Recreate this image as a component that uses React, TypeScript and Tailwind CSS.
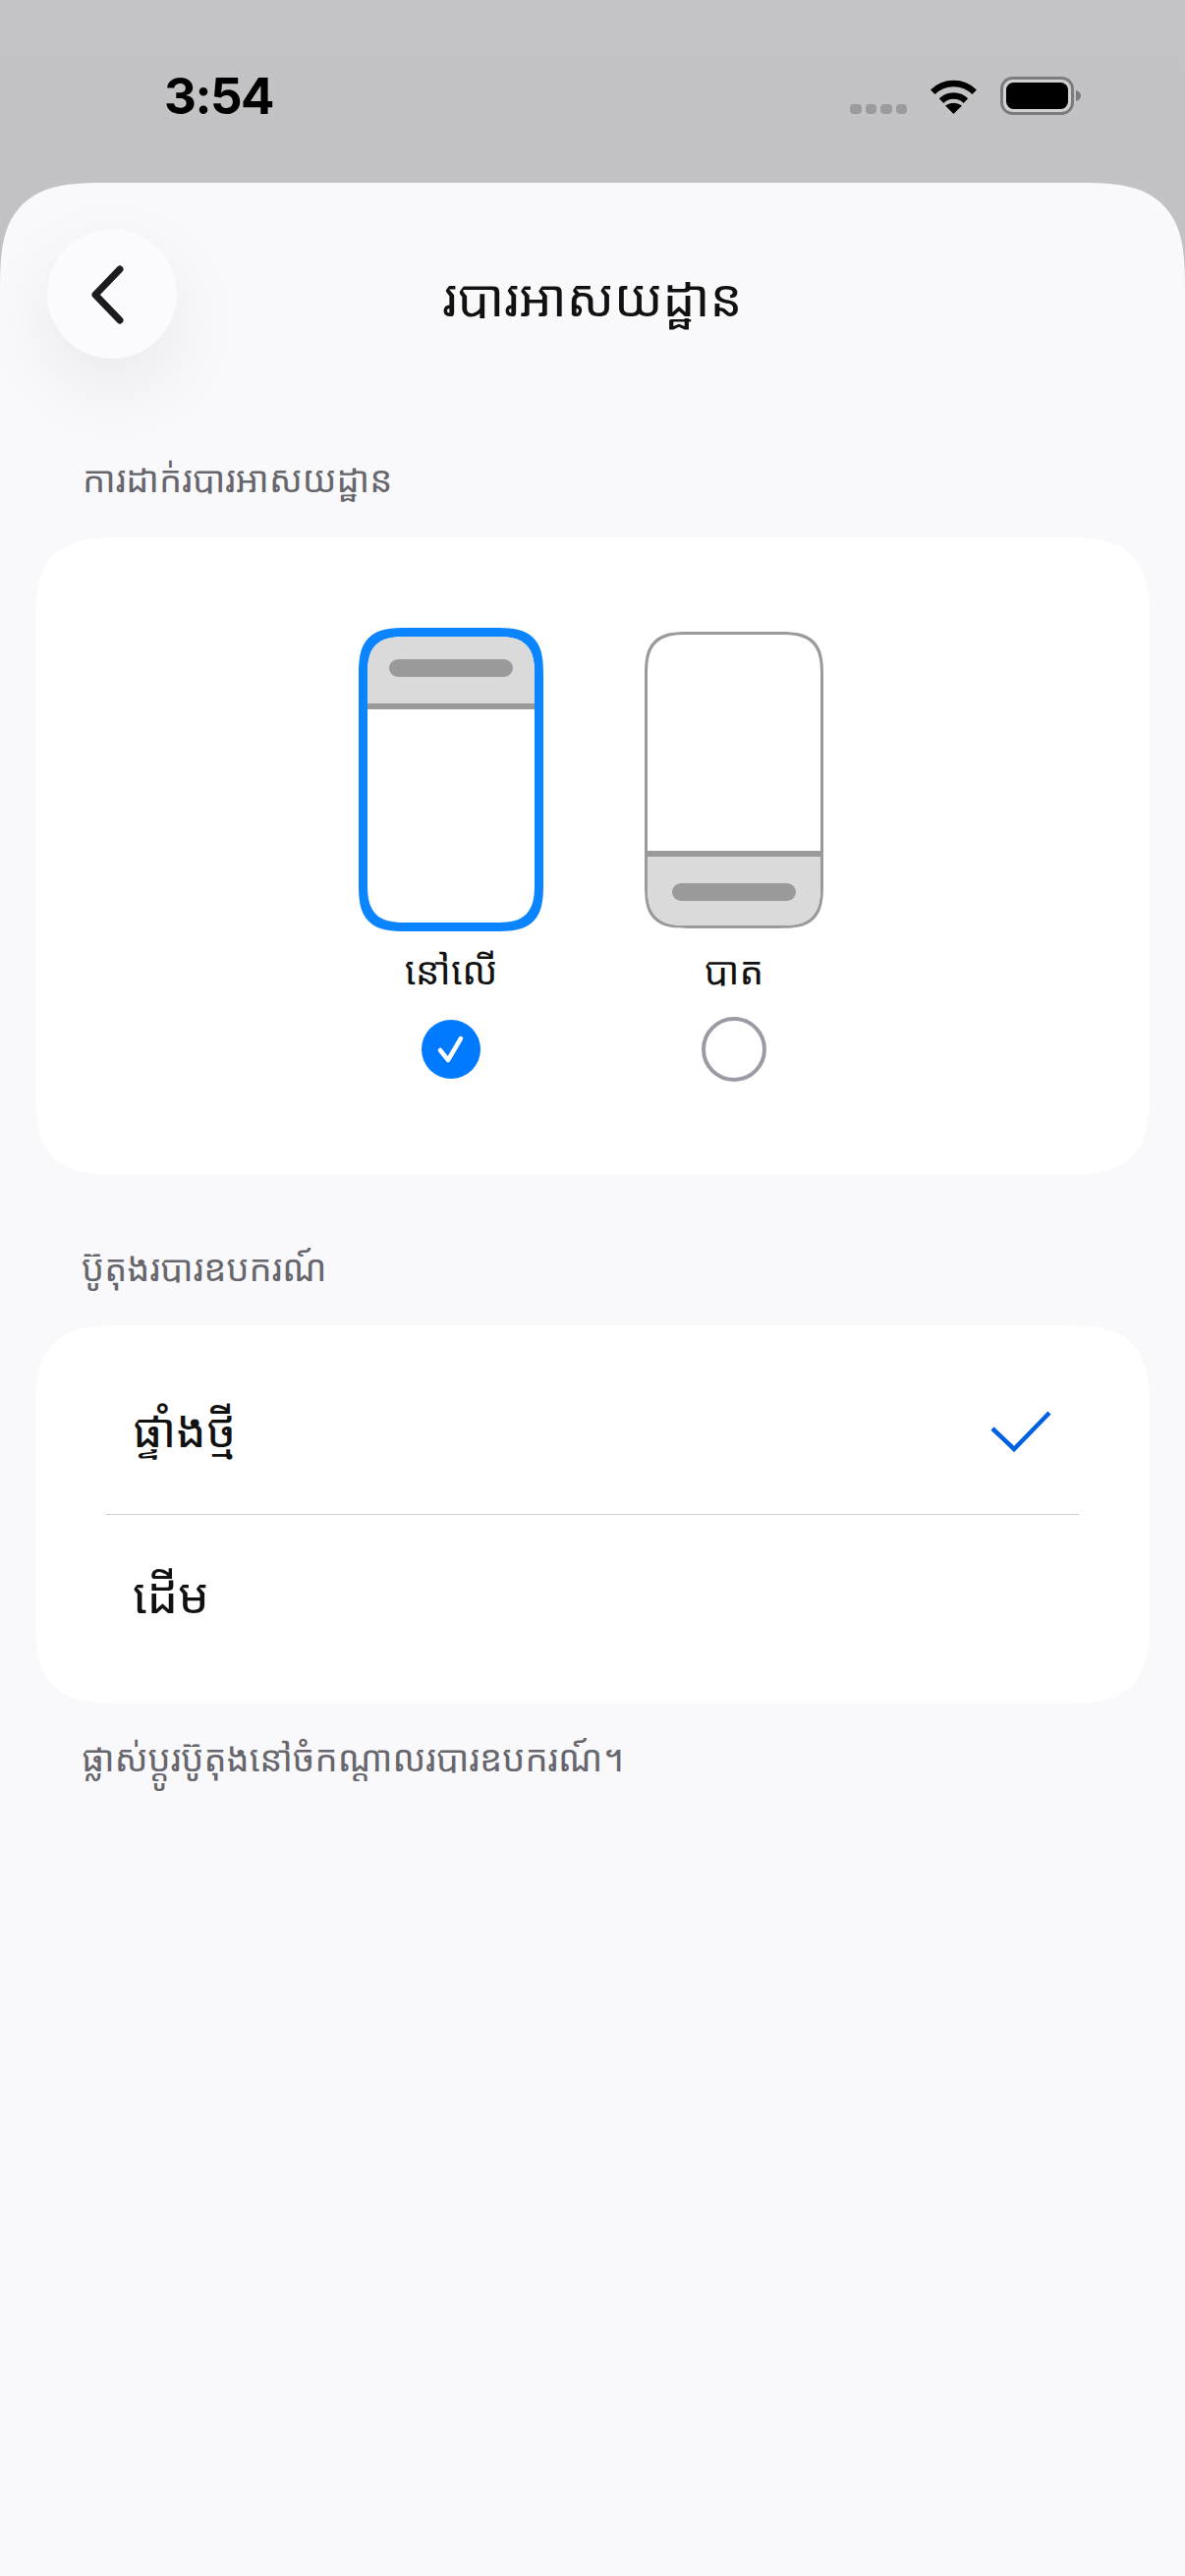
const khmer = "font-['Noto_Sans','Noto_Sans_Khmer','Khmer_Sangam_MN','DejaVu_Sans',sans-serif]";

function Wifi() {
  return (
    <svg width="51" height="37" viewBox="0 0 51 37">
      <path d="M4.3 14.8A30 30 0 0 1 46.7 14.8" fill="none" stroke="#000" strokeWidth="6.5" />
      <path d="M13.1 23.6A17.5 17.5 0 0 1 37.9 23.6" fill="none" stroke="#000" strokeWidth="6.5" />
      <path d="M25.5 37L17 28.5Q25.5 23 34 28.5Z" fill="#000" />
    </svg>
  );
}

function Battery() {
  return (
    <svg width="82" height="39" viewBox="0 0 82 39">
      <rect x="1.5" y="1.5" width="72" height="36" rx="11" fill="#d2d2d4" stroke="#7c7c7e" strokeWidth="3" />
      <rect x="6" y="6" width="63" height="27" rx="7.5" fill="#000" />
      <path d="M77 14Q82 15.5 82 19.5Q82 23.5 77 25Z" fill="#7c7c7e" />
    </svg>
  );
}

function PhoneTop() {
  return (
    <div className="w-[188px] h-[309px] rounded-[50px] [corner-shape:superellipse(1.6)] border-[9px] border-[#0a84ff] bg-white overflow-hidden flex flex-col">
      <div className="h-[74px] shrink-0 bg-[#dadada] flex justify-center pt-[23px] border-b-[6px] border-[#9a9a9a]">
        <div className="w-[126px] h-[18px] rounded-full bg-[#9a9a9a]" />
      </div>
    </div>
  );
}

function PhoneBottom() {
  return (
    <div className="w-[182px] h-[302px] rounded-[46px] [corner-shape:superellipse(1.6)] border-[3px] border-[#9a9a9e] bg-white overflow-hidden flex flex-col justify-end">
      <div className="h-[76px] shrink-0 bg-[#dadada] flex justify-center pt-[27px] border-t-[6px] border-[#9a9a9a]">
        <div className="w-[126px] h-[18px] rounded-full bg-[#9a9a9a]" />
      </div>
    </div>
  );
}

export default function App() {
  return (
    <div className={`w-[1206px] h-[2622px] flex flex-col overflow-hidden bg-gradient-to-b from-[#c3c3c5] to-[#b9b9bb] ${khmer}`}>
      <div className="h-[186px] shrink-0 flex items-start justify-between pl-[167px] pr-[106px] pt-[68px]">
        <span className="text-[51px] leading-[60px] font-bold text-black font-['Inter',sans-serif] tracking-[-1.5px]">3:54</span>
        <div className="flex items-start pt-[10px]">
          <div className="flex gap-[4px] mt-[28px] mr-[22px]">
            <div className="w-[11.5px] h-[10px] rounded-[4px] bg-[#9b9b9d]" />
            <div className="w-[11.5px] h-[10px] rounded-[4px] bg-[#9b9b9d]" />
            <div className="w-[11.5px] h-[10px] rounded-[4px] bg-[#9b9b9d]" />
            <div className="w-[11.5px] h-[10px] rounded-[4px] bg-[#9b9b9d]" />
          </div>
          <div className="mt-[1px] mr-[22px]"><Wifi /></div>
          <Battery />
        </div>
      </div>

      <div className="flex-1 bg-[#f9f9fb] rounded-t-[110px] [corner-shape:superellipse(1.6)] px-[36px]">
        <div className="flex items-center px-[12px] pt-[47px]">
          <button className="w-[132px] h-[132px] shrink-0 rounded-full bg-[#fbfbfd] shadow-[0_28px_80px_rgba(0,0,0,0.07)] flex items-center justify-center">
            <svg width="44" height="64" viewBox="0 0 44 64" className="-ml-[6px] mt-[2px]">
              <path d="M33 6L8 32L33 58" fill="none" stroke="#1c1c1e" strokeWidth="7" strokeLinecap="round" strokeLinejoin="round" />
            </svg>
          </button>
          <h1 className="flex-1 text-center text-[52px] leading-[70px] font-normal text-[#111] pt-[6px]">របារអាសយដ្ឋាន</h1>
          <div className="w-[132px] shrink-0" />
        </div>

        <div className="pl-[48px] mt-[98px] h-[48px] text-[36.5px] leading-[48px] text-[#66666c]">ការដាក់របារអាសយដ្ឋាន</div>

        <div className="mt-[36px] h-[649px] rounded-[90px] [corner-shape:superellipse(1.6)] bg-white flex justify-center gap-[103px] pt-[92px] pr-[3px]">
          <div className="flex flex-col items-center w-[188px]">
            <PhoneTop />
            <div className="mt-[14px] h-[50px] text-[39px] leading-[50px] text-[#111]">នៅលើ</div>
            <div className="mt-[26px] w-[60px] h-[60px] rounded-full bg-[#007aff] flex items-center justify-center">
              <svg width="32" height="32" viewBox="0 0 32 32">
                <path d="M5 17L13 27L26 5" fill="none" stroke="#fff" strokeWidth="4.5" strokeLinecap="round" strokeLinejoin="round" />
              </svg>
            </div>
          </div>
          <div className="flex flex-col items-center w-[182px] pt-[4px]">
            <PhoneBottom />
            <div className="mt-[17px] h-[50px] text-[39px] leading-[50px] text-[#111]">បាត</div>
            <div className="mt-[23px] w-[66px] h-[66px] rounded-full border-[4px] border-[#9b9ba5] bg-white" />
          </div>
        </div>

        <div className="pl-[47px] mt-[62px] h-[64px] text-[36.5px] leading-[64px] text-[#66666c]">ប៊ូតុងរបារឧបករណ៍</div>

        <div className="mt-[27px] rounded-[90px] [corner-shape:superellipse(1.6)] bg-white px-[72px]">
          <div className="h-[193px] border-b border-[#cfcfd1] flex justify-between pl-[27px]">
            <span className="text-[48px] leading-[70px] text-[#111] self-center mt-[20px]">ផ្ទាំងថ្មី</span>
            <svg width="64" height="44" viewBox="0 0 64 44" className="mr-[26px] self-center mt-[22px]">
              <path d="M2 20L24 41L60 4" fill="none" stroke="#0062e0" strokeWidth="4.5" />
            </svg>
          </div>
          <div className="h-[192px] flex pl-[27px]">
            <span className="text-[50px] leading-[70px] text-[#111] self-center -mt-[30px]">ដើម</span>
          </div>
        </div>

        <div className="pl-[47px] mt-[23px] text-[36.5px] leading-[64px] text-[#66666c]">ផ្លាស់ប្ដូរប៊ូតុងនៅចំកណ្ដាលរបារឧបករណ៍។</div>
      </div>
    </div>
  );
}
